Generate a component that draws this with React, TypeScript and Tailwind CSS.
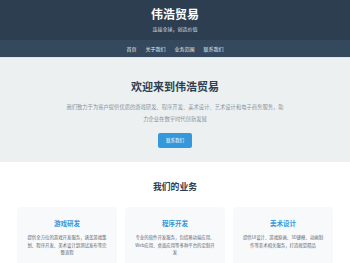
import React from 'react';

const font = { fontFamily: '"Noto Sans CJK SC", "Noto Sans", sans-serif' };

const services = [
  {
    title: '游戏研发',
    desc: '提供全方位的游戏开发服务，涵盖游戏策划、程序开发、美术设计到测试发布等完整流程',
  },
  {
    title: '程序开发',
    desc: '专业的软件开发服务，包括移动端应用、Web应用、桌面应用等多种平台的定制开发',
  },
  {
    title: '美术设计',
    desc: '提供UI设计、游戏原画、3D建模、动画制作等美术相关服务，打造视觉精品',
  },
];

export default function App() {
  return (
    <div className="w-[350px] h-[263px] overflow-hidden bg-white" style={font}>
      {/* Header */}
      <header className="h-[40px] bg-[#2c3e50] text-center pt-[6px]">
        <h1 className="text-[12px] leading-[16px] font-bold text-white">伟浩贸易</h1>
        <p className="mt-[3px] text-[5px] leading-[7px] text-[#d5dbe0]">连接全球，创造价值</p>
      </header>

      {/* Nav */}
      <nav className="h-[18px] bg-[#34495e] flex items-center justify-center gap-[9px] border-b border-[#dfe5ea]">
        {['首页', '关于我们', '业务范围', '联系我们'].map((item) => (
          <a key={item} className="text-[5px] leading-[7px] text-[#e8edf1]">{item}</a>
        ))}
      </nav>

      {/* Hero */}
      <section className="h-[104px] bg-[#ecf0f1] flex flex-col items-center pt-[21px]">
        <h2 className="text-[11px] leading-[14px] font-bold text-[#2c3e50]">欢迎来到伟浩贸易</h2>
        <p className="mt-[8px] w-[219px] text-center text-[5.3px] leading-[12px] text-[#8a959c]">
          我们致力于为客户提供优质的游戏研发、程序开发、美术设计、艺术设计和电子商务服务，助力企业在数字时代创新发展
        </p>
        <button className="mt-[8px] w-[34px] h-[15px] rounded-[2px] bg-[#3498db] text-white text-[4.5px] leading-[15px]">
          联系我们
        </button>
      </section>

      {/* Services */}
      <section className="pt-[19px] px-[17px]">
        <h2 className="text-center text-[8.8px] leading-[12px] font-bold text-[#2c3e50]">我们的业务</h2>
        <div className="mt-[14px] grid grid-cols-3 gap-[8px]">
          {services.map((s) => (
            <div key={s.title} className="h-[80px] rounded-[4px] bg-[#f8f9fa] px-[9px] pt-[12px] text-center">
              <h3 className="text-[6.5px] leading-[9px] font-bold text-[#3498db]">{s.title}</h3>
              <p className="mt-[6px] text-[4.4px] leading-[7.7px] text-[#5f6770]">{s.desc}</p>
            </div>
          ))}
        </div>
      </section>
    </div>
  );
}
